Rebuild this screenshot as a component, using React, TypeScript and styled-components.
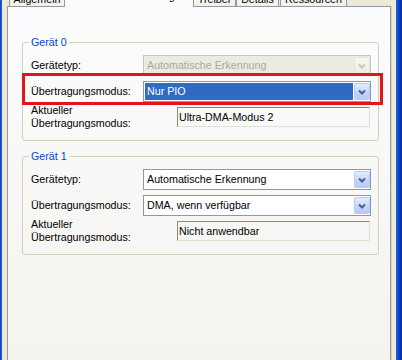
import React from "react";
import styled, { createGlobalStyle, css } from "styled-components";

const Global = createGlobalStyle`
  html, body { margin: 0; padding: 0; background: #ece9d8; }
  body {
    font-family: "Liberation Sans", Arial, sans-serif;
    font-size: 10.7px;
    color: #000;
  }
  #root { width: 402px; height: 360px; overflow: hidden; }
`;

const Window = styled.div`
  display: flex;
  width: 402px;
  height: 360px;
  background: #ece9d8;
  overflow: hidden;
`;

const LeftFrame = styled.div`
  width: 2px;
  flex: none;
  background: linear-gradient(to right, #0b3fbf, #2b65d7);
`;

const RightFrame = styled.div`
  width: 6px;
  flex: none;
  background: linear-gradient(to right, #2262da, #0d4bd0 35%, #0838b6 70%, #032a98);
`;

const Body = styled.div`
  flex: 1;
  min-width: 0;
  display: flex;
  flex-direction: column;
  padding: 0 5px;
`;

const TabStrip = styled.div`
  height: 6px;
  flex: none;
  display: flex;
  align-items: flex-end;
  padding-left: 2px;
`;

const Tab = styled.div<{ $w: number; $ml: number; $active?: boolean }>`
  box-sizing: border-box;
  width: ${(p) => p.$w}px;
  margin-left: ${(p) => p.$ml}px;
  height: 18px;
  border: 1px solid #919b9c;
  border-bottom: none;
  border-radius: 3px 3px 0 0;
  background: linear-gradient(to bottom, #fefefe, #f1f0ea);
  display: flex;
  align-items: flex-end;
  justify-content: center;
  padding-bottom: 1px;
  line-height: 12px;
  white-space: nowrap;
  overflow: hidden;
  ${(p) =>
    p.$active &&
    css`
      position: relative;
      z-index: 1;
      height: 21px;
      margin-bottom: -1px;
      padding-bottom: 5px;
      background: #fcfcfe;
    `}
`;

const Panel = styled.div`
  flex: 1;
  display: flex;
  flex-direction: column;
  padding: 0 11px 0 14px;
  border: 1px solid #919b9c;
  border-bottom: none;
  background: linear-gradient(to bottom, #fcfcfe, #f4f3ee);
  box-shadow: 1px 0 0 #d8d5c7;
`;

const Group = styled.fieldset<{ $mt: number }>`
  margin: ${(p) => p.$mt}px 0 0;
  padding: 6px 7px 13px 8px;
  min-width: 0;
  border: 1px solid #d0d0bf;
  border-radius: 3px;
`;

const Legend = styled.legend`
  margin-left: -2px;
  padding: 0 2px;
  line-height: 13px;
  color: #0046d5;
`;

const Rows = styled.div`
  display: flex;
  flex-direction: column;
  gap: 5px;
`;

const Row = styled.div<{ $h: number }>`
  position: relative;
  display: flex;
  align-items: center;
  height: ${(p) => p.$h}px;
`;

const Label = styled.div<{ $w: number }>`
  width: ${(p) => p.$w}px;
  flex: none;
  line-height: 13px;
  white-space: nowrap;
`;

const Combo = styled.div<{ $disabled?: boolean }>`
  flex: 1;
  box-sizing: border-box;
  height: 21px;
  display: flex;
  gap: 1px;
  padding: 1px 0 1px 1px;
  border: 1px solid ${(p) => (p.$disabled ? "#c9c7ba" : "#7f9db9")};
  background: ${(p) => (p.$disabled ? "#ecebe0" : "#ffffff")};
`;

const ComboText = styled.div<{ $selected?: boolean; $disabled?: boolean }>`
  flex: 1;
  display: flex;
  align-items: center;
  padding-left: 2px;
  line-height: 13px;
  white-space: nowrap;
  color: ${(p) => (p.$disabled ? "#aca899" : p.$selected ? "#ffffff" : "#000000")};
  background: ${(p) => (p.$selected ? "#316ac5" : "transparent")};
`;

const DropButton = styled.div<{ $disabled?: boolean }>`
  width: 16px;
  flex: none;
  box-sizing: border-box;
  display: flex;
  align-items: center;
  justify-content: center;
  border-radius: 2px;
  border: 1px solid ${(p) => (p.$disabled ? "#e6e4da" : "#b7cbf6")};
  background: ${(p) =>
    p.$disabled
      ? "linear-gradient(to bottom, #f7f6f2, #eeede6)"
      : "linear-gradient(to bottom, #e3ecfe, #c3d4fb 60%, #b6cbf8)"};
  color: ${(p) => (p.$disabled ? "#c9c7ba" : "#4d6185")};
`;

const StaticBox = styled.div`
  flex: 1;
  box-sizing: border-box;
  height: 20px;
  margin-right: 1px;
  display: flex;
  align-items: center;
  padding-left: 1px;
  line-height: 13px;
  border: 1px solid;
  border-color: #8c897c #e2e0d4 #e2e0d4 #8c897c;
  white-space: nowrap;
`;

const Highlight = styled.div`
  position: absolute;
  left: -9px;
  right: -12px;
  top: -8px;
  bottom: -3px;
  border: 3px solid #e3141b;
  pointer-events: none;
  z-index: 2;
`;

const Chevron = () => (
  <svg width="8" height="6" viewBox="0 0 8 6">
    <polyline
      points="1,1.5 4,4.5 7,1.5"
      fill="none"
      stroke="currentColor"
      strokeWidth="2"
    />
  </svg>
);

type ComboProps = { value: string; disabled?: boolean; selected?: boolean };

const ComboBox = ({ value, disabled, selected }: ComboProps) => (
  <Combo $disabled={disabled}>
    <ComboText $disabled={disabled} $selected={selected}>
      {value}
    </ComboText>
    <DropButton $disabled={disabled}>
      <Chevron />
    </DropButton>
  </Combo>
);

type DeviceProps = {
  title: string;
  mt: number;
  typ: string;
  typDisabled?: boolean;
  modus: string;
  modusSelected?: boolean;
  current: string;
  highlight?: boolean;
};

const DeviceGroup = ({
  title,
  mt,
  typ,
  typDisabled,
  modus,
  modusSelected,
  current,
  highlight,
}: DeviceProps) => (
  <Group $mt={mt}>
    <Legend>{title}</Legend>
    <Rows>
      <Row $h={21}>
        <Label $w={112}>Gerätetyp:</Label>
        <ComboBox value={typ} disabled={typDisabled} />
      </Row>
      <Row $h={21}>
        <Label $w={112}>Übertragungsmodus:</Label>
        <ComboBox value={modus} selected={modusSelected} />
        {highlight && <Highlight />}
      </Row>
      <Row $h={20}>
        <Label $w={146}>
          Aktueller
          <br />
          Übertragungsmodus:
        </Label>
        <StaticBox>{current}</StaticBox>
      </Row>
    </Rows>
  </Group>
);

export default function App() {
  return (
    <>
      <Global />
      <Window>
        <LeftFrame />
        <Body>
          <TabStrip>
            <Tab $w={56} $ml={0}>Allgemein</Tab>
            <Tab $w={130} $ml={-1} $active>
              Erweiterte Einstellungen
            </Tab>
            <Tab $w={43} $ml={-1}>Treiber</Tab>
            <Tab $w={43} $ml={0}>Details</Tab>
            <Tab $w={67} $ml={1}>Ressourcen</Tab>
          </TabStrip>
          <Panel>
            <DeviceGroup
              title="Gerät 0"
              mt={29}
              typ="Automatische Erkennung"
              typDisabled
              modus="Nur PIO"
              modusSelected
              current="Ultra-DMA-Modus 2"
              highlight
            />
            <DeviceGroup
              title="Gerät 1"
              mt={9}
              typ="Automatische Erkennung"
              modus="DMA, wenn verfügbar"
              current="Nicht anwendbar"
            />
          </Panel>
        </Body>
        <RightFrame />
      </Window>
    </>
  );
}
